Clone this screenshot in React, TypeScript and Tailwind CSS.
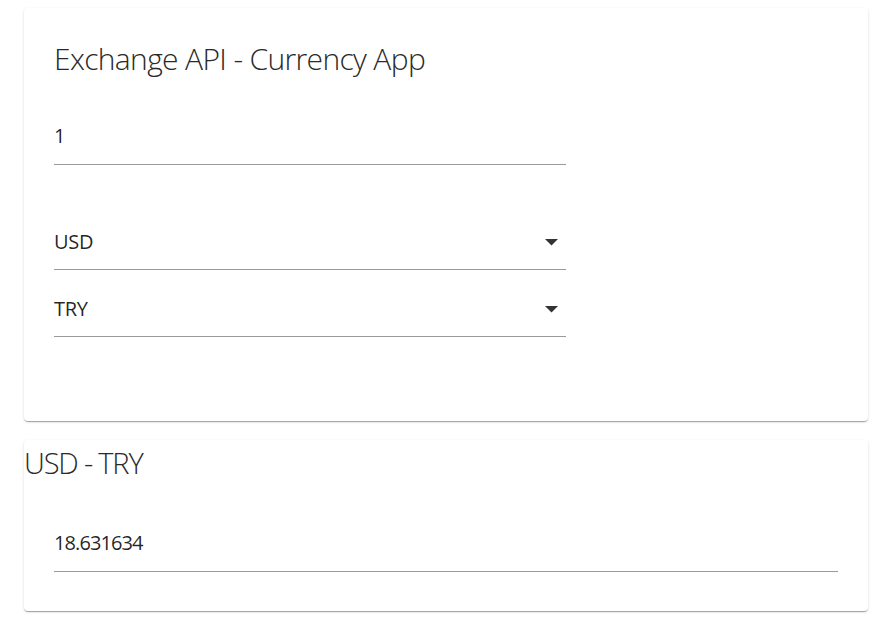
import React from "react";

const shadow =
  "shadow-[0_2px_1px_-1px_rgba(0,0,0,0.2),0_1px_1px_0_rgba(0,0,0,0.14),0_1px_3px_0_rgba(0,0,0,0.12)]";

function Arrow() {
  return (
    <svg width="13" height="7" viewBox="0 0 13 7" className="shrink-0">
      <polygon points="0,0 13,0 6.5,6.5" fill="rgba(0,0,0,0.8)" />
    </svg>
  );
}

function SelectRow({ value, mt }: { value: string; mt: string }) {
  return (
    <div className={`${mt} flex items-center justify-between border-b border-[#9a9a9a] pb-[15px] pr-[8px]`}>
      <span className="text-[20px] leading-[24px] tracking-[-0.3px] text-[rgba(0,0,0,0.87)]">{value}</span>
      <Arrow />
    </div>
  );
}

export default function App() {
  return (
    <div className="min-h-[633px] bg-white font-['Open_Sans',sans-serif]">
      <div className="ml-[24px] w-[844px] pt-[8px]">
        <div className={`h-[413px] rounded-[4px] bg-white pl-[30px] pt-[33px] ${shadow}`}>
          <h1 className="text-[30px] font-light leading-[36px] tracking-[-0.65px] text-[#2a2a2a]">
            Exchange API - Currency App
          </h1>
          <div className="w-[512px]">
            <div className="mt-[47px] border-b border-[#9a9a9a] pb-[15px]">
              <span className="text-[20px] leading-[24px] text-[rgba(0,0,0,0.87)]">1</span>
            </div>
            <SelectRow value="USD" mt="mt-[65px]" />
            <SelectRow value="TRY" mt="mt-[27px]" />
          </div>
        </div>
        <div className={`mt-[19px] h-[171px] rounded-[4px] bg-white pt-[5px] ${shadow}`}>
          <h2 className="text-[29px] font-light leading-[36px] tracking-[-1.2px] text-[#2a2a2a]">USD - TRY</h2>
          <div className="mx-[30px] mt-[50px] border-b border-[#9a9a9a] pb-[15px]">
            <span className="text-[20px] leading-[24px] tracking-[-0.9px] text-[rgba(0,0,0,0.87)]">18.631634</span>
          </div>
        </div>
      </div>
    </div>
  );
}
